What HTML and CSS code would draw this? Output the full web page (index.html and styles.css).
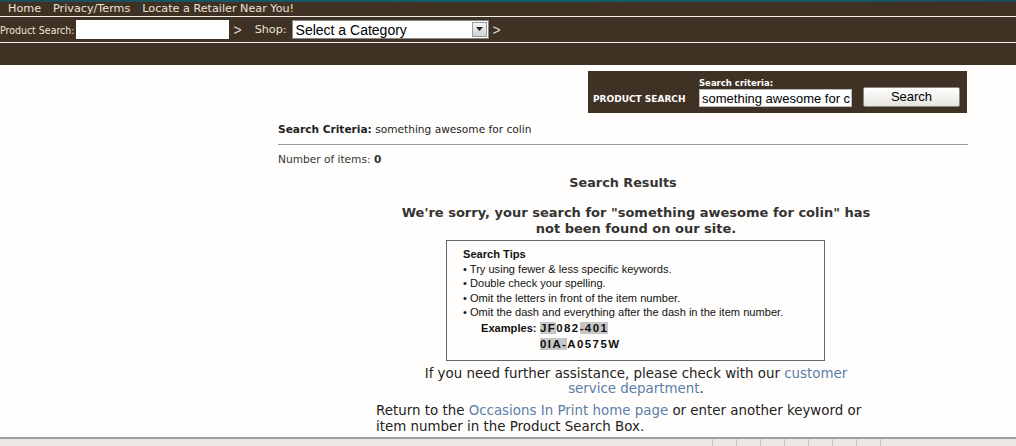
FILE: index.html
```html
<!DOCTYPE html>
<html>
<head>
<meta charset="utf-8">
<link rel="stylesheet" href="styles.css">
</head>
<body>
<div class="page">
  <div class="topstrip"></div>
  <nav class="nav">
    <a>Home</a><a>Privacy/Terms</a><a>Locate a Retailer Near You!</a>
  </nav>
  <div class="searchbar">
    <span class="lbl">Product Search:</span>
    <span class="field wide"></span>
    <span class="gt">&gt;</span>
    <span class="lbl shop">Shop:</span>
    <span class="select">Select a Category<span class="arrow"><svg width="9" height="5" viewBox="0 0 9 5"><path d="M1 0h7L4.5 4z" fill="#222"/></svg></span></span>
    <span class="gt">&gt;</span>
  </div>
  <div class="band"></div>

  <main class="main">
    <div class="psbox">
      <div class="pstitle">PRODUCT SEARCH</div>
      <div class="pscol">
        <div class="pslabel">Search criteria:</div>
        <div class="psinput">something awesome for c</div>
      </div>
      <div class="psbtn">Search</div>
    </div>

    <div class="content">
      <div class="criteria"><b>Search Criteria:</b> something awesome for colin</div>
      <div class="rule"></div>
      <div class="count">Number of items: <b>0</b></div>
      <div class="results-title">Search Results</div>
      <div class="results">
        <div class="sorry"><div>We're sorry, your search for "something awesome for colin" has</div><div>not been found on our site.</div></div>
        <div class="tips">
          <div class="tips-title">Search Tips</div>
          <div>&bull; Try using fewer &amp; less specific keywords.</div>
          <div>&bull; Double check your spelling.</div>
          <div>&bull; Omit the letters in front of the item number.</div>
          <div>&bull; Omit the dash and everything after the dash in the item number.</div>
          <div class="examples">
            <span class="ex-label">Examples:</span>
            <div class="codes">
              <div class="code"><span class="hl">JF</span>082<span class="hl">-401</span></div>
              <div class="code"><span class="hl">0IA-</span>A0575W</div>
            </div>
          </div>
        </div>
        <div class="help">
          <div>If you need further assistance, please check with our <a>customer</a></div>
          <div><a>service department</a>.</div>
        </div>
        <div class="ret">
          <div>Return to the <a>Occasions In Print home page</a> or enter another keyword or</div>
          <div>item number in the Product Search Box.</div>
        </div>
      </div>
    </div>
  </main>

  <div class="status">
    <span class="st-main"></span>
    <span class="st-cell"></span><span class="st-cell"></span><span class="st-cell"></span><span class="st-cell"></span><span class="st-cell"></span><span class="st-cell"></span><span class="st-cell"></span>
    <span class="st-zone"><svg width="12" height="8" viewBox="0 0 12 8"><circle cx="6" cy="7" r="5" fill="#5b7fb5"/></svg></span>
  </div>
</div>
</body>
</html>
```
FILE: styles.css
```css
html, body { margin: 0; padding: 0; }
body { background: #fffefc; font-family: "DejaVu Sans", Verdana, sans-serif; color: #222; }
.page { width: 1016px; height: 446px; overflow: hidden; position: relative; }

.topstrip { height: 2px; background: linear-gradient(90deg, #1d4e58, #0f5f6e 50%, #1d4e58); }
.nav { height: 14px; background: #3f3124; display: flex; gap: 12px; padding-left: 8px; align-items: center; border-bottom: 1px solid #f4efe6; }
.nav a { color: #ece4d6; font-size: 11.2px; line-height: 14px; }

.searchbar { height: 25px; background: #3f3124; display: flex; align-items: center; border-bottom: 1px solid #f4efe6; color: #ece4d6; }
.lbl { font-family: "DejaVu Sans Condensed", "DejaVu Sans", sans-serif; font-size: 10.5px; }
.shop { font-family: "DejaVu Sans", sans-serif; font-size: 11.2px; margin-left: 13px; margin-right: 5px; }
.field { display: inline-block; background: #fff; height: 19px; }
.field.wide { width: 153px; margin-left: 2px; }
.gt { font-family: "Liberation Sans", sans-serif; font-size: 14px; color: #ddd; margin-left: 4px; }
.select { display: inline-flex; justify-content: space-between; align-items: center; width: 192px; height: 17px; background: #fff; border: 1px solid #888; color: #000; font-family: "Liberation Sans", Arial, sans-serif; font-size: 14px; padding-left: 3px; box-sizing: content-box; }
.arrow { width: 15px; height: 15px; margin-right: 1px; background: linear-gradient(#f4f4f4, #cfcfcf); border: 1px solid #999; box-sizing: border-box; display: flex; align-items: center; justify-content: center; }

.band { height: 22px; background: #3f3124; }

.main { padding-left: 278px; width: 690px; }
.psbox { margin-left: 310px; margin-top: 6px; width: 379px; height: 42px; box-sizing: border-box; background: #3f3124; display: flex; align-items: flex-end; padding: 0 0 6px 5px; color: #fff; }
.pstitle { font-size: 9px; font-weight: bold; padding-bottom: 3px; width: 106px; }
.pscol { display: flex; flex-direction: column; }
.pslabel { font-size: 8.5px; font-weight: bold; margin-bottom: 1px; }
.psinput { width: 153px; height: 18px; background: #fff; color: #000; font-family: "Liberation Sans", Arial, sans-serif; font-size: 13px; line-height: 18px; padding-left: 2px; box-sizing: border-box; overflow: hidden; white-space: nowrap; border: 1px solid #bbb; }
.psbtn { margin-left: 11px; width: 97px; height: 20px; box-sizing: border-box; background: linear-gradient(#fefefe, #e6e4dc); border: 1px solid #8a8a80; border-radius: 2px; color: #000; font-family: "Liberation Sans", Arial, sans-serif; font-size: 13px; text-align: center; line-height: 18px; margin-bottom: 0; }

.content { font-size: 10.6px; color: #222; }
.criteria { margin-top: 10px; line-height: 13px; }
.rule { margin-top: 8px; height: 1px; background: #999; }
.count { margin-top: 8px; line-height: 13px; color: #333; }
.results-title { text-align: center; font-weight: bold; font-size: 12.8px; margin-top: 9px; line-height: 15px; color: #333; }
.results { margin-left: 98px; width: 520px; }
.sorry { text-align: center; font-weight: bold; font-size: 13px; line-height: 16px; margin-top: 15px; color: #333; white-space: nowrap; }
.tips { margin: 3px 0 0 70px; width: 379px; height: 121px; box-sizing: border-box; border: 1px solid #666; padding: 6px 0 0 16px; font-family: "Liberation Sans", Arial, sans-serif; font-size: 11.1px; line-height: 14.5px; color: #111; }
.tips-title { font-weight: bold; }
.examples { display: flex; margin-left: 18px; margin-top: 0; }
.ex-label { font-weight: bold; width: 59px; line-height: 16px; }
.code { font-weight: bold; letter-spacing: 1.4px; font-size: 11.5px; line-height: 16px; }
.hl { background: #c6c6c6; }
.help { margin: 5px 0 0 0; text-align: center; font-size: 13.4px; line-height: 15px; color: #222; white-space: nowrap; }
.help a, .ret a { color: #5a7ea8; }
.ret { margin: 7px 0 0 0; font-size: 13.4px; line-height: 16px; color: #222; white-space: nowrap; }

.status { position: absolute; left: 0; top: 437px; width: 1016px; height: 9px; background: #ece9e4; border-top: 2px solid #9e9e9e; display: flex; }
.st-main { width: 712px; }
.st-cell { width: 23px; border-left: 1px solid #c8c6c0; }
.st-zone { border-left: 1px solid #c8c6c0; padding-left: 8px; }
```
